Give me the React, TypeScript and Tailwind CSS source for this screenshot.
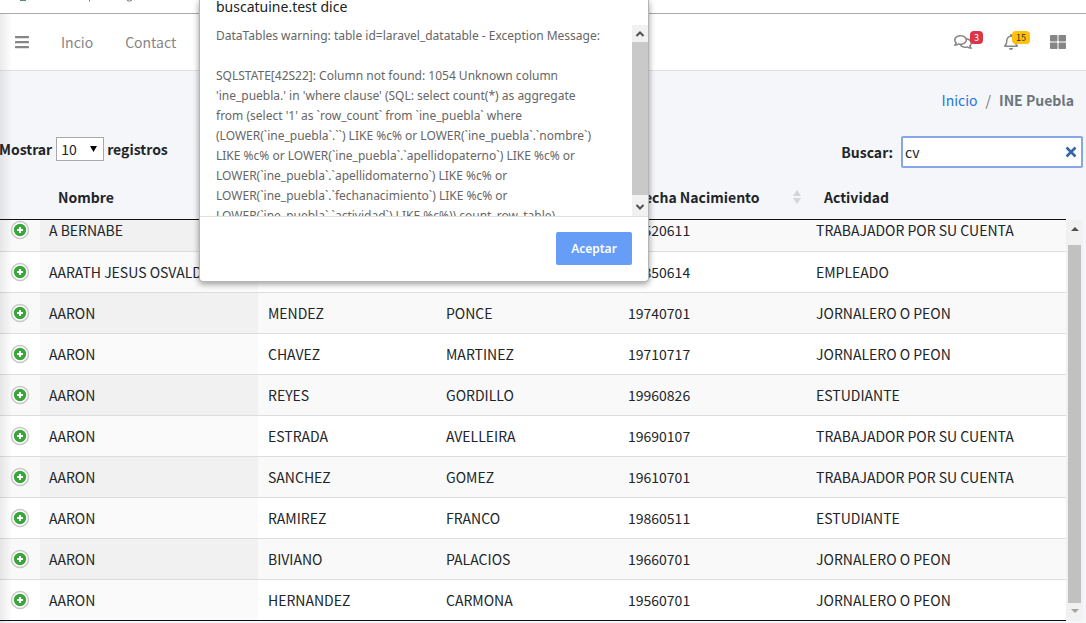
import * as React from "react";
import { FaBars, FaRegBell, FaRegComments, FaThLarge } from "react-icons/fa";

type Persona = {
  nombre: string;
  paterno: string;
  materno: string;
  nacimiento: string;
  actividad: string;
};

const PERSONAS: Persona[] = [
  { nombre: "A BERNABE", paterno: "", materno: "", nacimiento: "19520611", actividad: "TRABAJADOR POR SU CUENTA" },
  { nombre: "AARATH JESUS OSVALDO", paterno: "", materno: "", nacimiento: "19850614", actividad: "EMPLEADO" },
  { nombre: "AARON", paterno: "MENDEZ", materno: "PONCE", nacimiento: "19740701", actividad: "JORNALERO O PEON" },
  { nombre: "AARON", paterno: "CHAVEZ", materno: "MARTINEZ", nacimiento: "19710717", actividad: "JORNALERO O PEON" },
  { nombre: "AARON", paterno: "REYES", materno: "GORDILLO", nacimiento: "19960826", actividad: "ESTUDIANTE" },
  { nombre: "AARON", paterno: "ESTRADA", materno: "AVELLEIRA", nacimiento: "19690107", actividad: "TRABAJADOR POR SU CUENTA" },
  { nombre: "AARON", paterno: "SANCHEZ", materno: "GOMEZ", nacimiento: "19610701", actividad: "TRABAJADOR POR SU CUENTA" },
  { nombre: "AARON", paterno: "RAMIREZ", materno: "FRANCO", nacimiento: "19860511", actividad: "ESTUDIANTE" },
  { nombre: "AARON", paterno: "BIVIANO", materno: "PALACIOS", nacimiento: "19660701", actividad: "JORNALERO O PEON" },
  { nombre: "AARON", paterno: "HERNANDEZ", materno: "CARMONA", nacimiento: "19560701", actividad: "JORNALERO O PEON" },
];

const MENSAJE = [
  "DataTables warning: table id=laravel_datatable - Exception Message:",
  "",
  "SQLSTATE[42S22]: Column not found: 1054 Unknown column",
  "'ine_puebla.' in 'where clause' (SQL: select count(*) as aggregate",
  "from (select '1' as `row_count` from `ine_puebla` where",
  "(LOWER(`ine_puebla`.``) LIKE %c% or LOWER(`ine_puebla`.`nombre`)",
  "LIKE %c% or LOWER(`ine_puebla`.`apellidopaterno`) LIKE %c% or",
  "LOWER(`ine_puebla`.`apellidomaterno`) LIKE %c% or",
  "LOWER(`ine_puebla`.`fechanacimiento`) LIKE %c% or",
  "LOWER(`ine_puebla`.`actividad`) LIKE %c%)) count_row_table)",
];

// Mismas columnas para la cabecera y el cuerpo con scroll
function Columnas() {
  return (
    <colgroup>
      <col className="w-10" />
      <col className="w-[218px]" />
      <col className="w-[178px]" />
      <col className="w-[182px]" />
      <col className="w-[188px]" />
      <col />
    </colgroup>
  );
}

function Orden() {
  return (
    <svg viewBox="0 0 8 14" className="h-3.5 w-2 fill-[#d3d5d9]" aria-hidden="true">
      <path d="M4 0 8 6H0ZM4 14 0 8H8Z" />
    </svg>
  );
}

function Titulo({ children, orden = true }: { children: string; orden?: boolean }) {
  return (
    <th scope="col" className="pt-1.5 pr-[5px] pb-0 pl-[18px] text-left">
      <div className="flex items-center justify-between">
        <span className="whitespace-nowrap">{children}</span>
        {orden && <Orden />}
      </div>
    </th>
  );
}

function BotonDetalle() {
  return (
    <button aria-label="Ver detalle" className="block">
      <svg viewBox="0 0 20 20" className="size-5">
        <circle cx="10" cy="10" r="8.5" fill="#fff" stroke="#c6c9c6" strokeWidth="1.5" />
        <circle cx="10" cy="10" r="6.2" fill="#3aa53a" />
        <path d="M10 7v6M7 10h6" stroke="#fff" strokeWidth="2" />
      </svg>
    </button>
  );
}

function Navegacion() {
  return (
    <nav className="flex h-[57px] items-center justify-between border-b border-[#dee2e6] bg-white pr-5 pl-3.5 text-[#868686]">
      <div className="flex items-center">
        <button aria-label="Menú">
          <FaBars className="size-4" />
        </button>
        <a href="#" className="ml-[31px]">Incio</a>
        <a href="#" className="ml-8">Contact</a>
      </div>
      <div className="flex items-center">
        <a href="#" aria-label="Mensajes" className="relative">
          <FaRegComments className="h-4 w-[18px]" />
          <span className="absolute -top-[3px] left-4 rounded-sm bg-[#dc3545] px-1 text-[9px] leading-[13px] text-white">3</span>
        </a>
        <a href="#" aria-label="Notificaciones" className="relative ml-8">
          <FaRegBell className="h-4 w-3.5" />
          <span className="absolute -top-[3px] left-2 rounded-sm bg-[#ffc107] px-1 text-[9px] leading-[13px] text-[#1f2d3d]">15</span>
        </a>
        <button aria-label="Panel" className="ml-8">
          <FaThLarge className="size-4" />
        </button>
      </div>
    </nav>
  );
}

function Flecha() {
  return (
    <svg viewBox="0 0 16 17" className="h-[17px] w-4" fill="none" stroke="#505050" strokeWidth="2">
      <path d="M4.500 11 8 7.500 11.500 11" />
    </svg>
  );
}

function Alerta() {
  return (
    <div
      role="alertdialog"
      aria-labelledby="alerta-titulo"
      className="absolute top-0 left-[199px] w-[450px] rounded-b-sm border-x border-b border-[#b5b5b5] bg-white font-['Noto_Sans',sans-serif] font-normal text-[#666] shadow-[0_2px_6px_rgba(0,0,0,0.4)]"
    >
      <h2 id="alerta-titulo" className="h-[25px] pl-4 text-sm leading-[14px] text-[#222]">
        buscatuine.test dice
      </h2>
      <div className="flex h-[191px] overflow-hidden">
        <div className="flex-1 pt-px pl-4 text-xs leading-5 whitespace-nowrap">
          {MENSAJE.map((linea, i) => (
            <p key={i} className="h-5">{linea}</p>
          ))}
        </div>
        <div className="flex w-4 flex-col bg-[#f1f1f1]">
          <Flecha />
          <div className="flex-1 bg-[#c9c9c9]" />
          <div className="mt-1 rotate-180">
            <Flecha />
          </div>
        </div>
      </div>
      <div className="flex justify-end border-t border-[#e0e0e0] pt-[15px] pr-4 pb-4">
        <button className="h-[33px] w-[76px] rounded-xs bg-[#669df6] text-xs font-semibold text-white">Aceptar</button>
      </div>
    </div>
  );
}

export default function App() {
  const [buscar, setBuscar] = React.useState("cv");

  return (
    <div className="relative overflow-hidden bg-[#f4f6f9] font-['Noto_Sans_CJK_SC',sans-serif] text-sm text-[#212529]">
      <div className="h-3.5 border-b border-[#aaa] bg-white">
        <svg viewBox="0 0 140 3" className="h-[3px] w-[140px]" fill="none" stroke="#777" aria-hidden="true">
          <path d="M20 0h6" stroke="#4f8a83" strokeWidth="2" />
          <path d="M89.500 0v1.500M127 .5q3 1.500 5-.5" />
        </svg>
      </div>
      <Navegacion />

      <main className="mr-[3px]">
        <ol className="flex justify-end gap-2 pt-[19px] pr-[9px] leading-5">
          <li><a href="#" className="text-[#1f75e0]">Inicio</a></li>
          <li className="text-[#6c757d]">/</li>
          <li className="font-bold text-[#6c757d]">INE Puebla</li>
        </ol>

        <div className="mt-[26px] flex items-start justify-between font-bold">
          <label className="-ml-px flex items-center gap-1 pt-px">
            Mostrar
            <select className="h-6 w-12 appearance-none border border-[#a9a9a9] bg-white pl-1 font-normal" defaultValue="10">
              <option>10</option>
              <option>25</option>
              <option>50</option>
            </select>
            <svg viewBox="0 0 8 7" className="pointer-events-none -ml-[18px] h-1.5 w-[7px]"><path d="M0 0h8L4 7Z" /></svg>
            <span className="ml-1.5">registros</span>
          </label>
          <label className="flex items-center gap-2">
            Buscar:
            <span className="flex h-8 w-[182px] items-center rounded-xs border-2 border-[#86a8e6] bg-white pr-1">
              <input
                value={buscar}
                onChange={(e) => setBuscar(e.target.value)}
                className="min-w-0 flex-1 pl-0.5 font-normal outline-none"
              />
              <button aria-label="Limpiar" onClick={() => setBuscar("")}>
                <svg viewBox="0 0 12 12" className="size-3" stroke="#3367a8" strokeWidth="2.6"><path d="m1.500 1.500 9 9M10.500 1.500l-9 9" /></svg>
              </button>
            </span>
          </label>
        </div>

        <div className="mr-[17px] border-b border-[#111]">
          <table className="w-full table-fixed border-collapse">
            <Columnas />
            <thead>
              <tr className="h-[51px]">
                <th />
                <Titulo>Nombre</Titulo>
                <Titulo>Apellido Paterno</Titulo>
                <Titulo>Apellido Materno</Titulo>
                <Titulo>Fecha Nacimiento</Titulo>
                <Titulo orden={false}>Actividad</Titulo>
              </tr>
            </thead>
          </table>
        </div>

        <div className="flex">
          <div className="flex h-[401px] flex-1 flex-col justify-end overflow-hidden border-b border-[#111]">
            <table className="w-full table-fixed border-collapse">
              <Columnas />
              <tbody>
                {PERSONAS.map((p, i) => (
                  <tr key={i} className="h-[41px] border-b border-[#ddd] bg-white last:border-0 odd:bg-[#f9f9f9]">
                    <td className="pl-2.5"><BotonDetalle /></td>
                    <td className={i % 2 ? "bg-[#fafafa] pl-[9px] whitespace-nowrap" : "bg-[#f1f1f1] pl-[9px] whitespace-nowrap"}>{p.nombre}</td>
                    <td className="pl-2.5">{p.paterno}</td>
                    <td className="pl-2.5">{p.materno}</td>
                    <td className="pl-2.5">{p.nacimiento}</td>
                    <td className="pl-2.5">{p.actividad}</td>
                  </tr>
                ))}
              </tbody>
            </table>
          </div>
          <div className="flex w-[17px] flex-col items-center bg-[#f1f1f1]">
            <svg viewBox="0 0 8 4" className="mt-[7px] mb-3.5 h-1 w-2" fill="#505050"><path d="M4 0 8 4H0Z" /></svg>
            <div className="w-[13px] flex-1 bg-[#c1c1c1]" />
            <svg viewBox="0 0 8 4" className="mt-1.5 mb-2 h-1 w-2" fill="#a3a3a3"><path d="M0 0H8L4 4Z" /></svg>
          </div>
        </div>
      </main>
      <div className="h-0.5" />

      <div className="pointer-events-none absolute top-3.5 bottom-0 left-0 w-3 bg-linear-to-r from-black/8 to-transparent" />
      <Alerta />
    </div>
  );
}
